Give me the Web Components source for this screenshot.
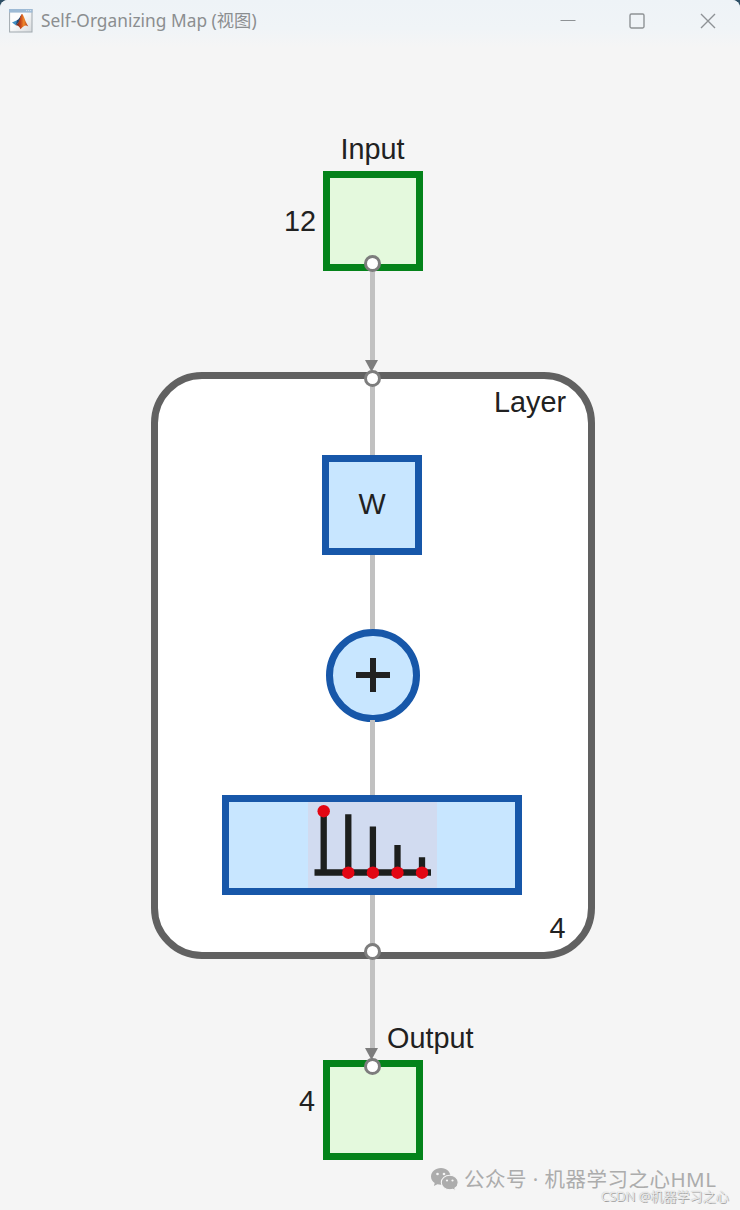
<!DOCTYPE html>
<html lang="zh">
<head>
<meta charset="utf-8">
<title>Self-Organizing Map</title>
<style>
body{margin:0;background:#2d4f66}
</style>
</head>
<body>
<map-window></map-window>
<script>
const define = (name, html, setup) => customElements.define(name, class extends HTMLElement {
  constructor() {
    super();
    this.attachShadow({mode: 'open'}).innerHTML = html;
  }
  connectedCallback() {
    if (this.hasAttribute('x')) {
      this.style.position = 'absolute';
      this.style.left = this.getAttribute('x') + 'px';
      this.style.top = this.getAttribute('y') + 'px';
    }
    if (setup) setup(this);
  }
});

const size = el => {
  el.style.width = el.getAttribute('w') + 'px';
  el.style.height = el.getAttribute('h') + 'px';
};

define('title-bar', `
<style>
:host{display:flex;align-items:center;height:48px;box-sizing:border-box;padding:0 24px 7px 9px;background:linear-gradient(#eef3f7 0,#f0f4f7 60%,#f5f5f5 100%);color:#8b8e90;font:17.3px/24px "Noto Sans","Noto Sans CJK SC",sans-serif}
.name{margin-left:8px;flex:1;white-space:nowrap;letter-spacing:.03px}
svg{display:block;flex:none}
.min{margin-right:53px}.max{margin-right:55px}
</style>
<svg width="24" height="24" viewBox="0 0 24 24">
  <defs>
    <linearGradient id="p" x2="1" y2="1"><stop offset=".4" stop-color="#fdfdfd"/><stop offset="1" stop-color="#d6dadd"/></linearGradient>
    <linearGradient id="f"><stop offset="0" stop-color="#5a1c1c"/><stop offset=".4" stop-color="#c9481c"/><stop offset=".65" stop-color="#f08a2a"/><stop offset="1" stop-color="#a82c16"/></linearGradient>
  </defs>
  <rect x=".6" y=".6" width="22.4" height="22.4" fill="url(#p)" stroke="#a0a8ae"/>
  <rect x="0" y="0" width="23.5" height="3.6" fill="#9dbad5"/>
  <path d="M17 1.6h1.2M19 1.6h1.2M21 1.6h1.2" stroke="#d5e2ee"/>
  <path d="M3 13.4 8 11.3 10 13 6.8 16.3Z" fill="#3f8fc4"/>
  <path d="M8 11.3C10 10.6 11 7 13 5L10.5 12.5 6.8 16.3Z" fill="#244a74"/>
  <path d="M13 4.8C15 6.5 16.2 13 19.3 17.4 16.8 15.7 15 16.2 11.6 20.2 10.5 17.6 9 16.3 6.8 16.3 10.5 14.5 11 7 13 4.8Z" fill="url(#f)"/>
</svg>
<span class="name"><slot></slot></span>
<svg class="min" width="16" height="16"><path d="M.5 7.5h15" stroke="#8e9295" stroke-width="1.2"/></svg>
<svg class="max" width="16" height="16"><rect x="1" y="1" width="14" height="14" rx="1.4" fill="none" stroke="#8e9295" stroke-width="1.4"/></svg>
<svg width="16" height="16"><path d="M1 1l14 14M15 1L1 15" stroke="#8e9295" stroke-width="1.4"/></svg>
`);

define('diagram-node', `
<style>
:host{display:block;box-sizing:border-box}
:host([kind=io]){background:#e4f9dd;border:7px solid #04831a}
:host([kind=op]){background:#c8e6ff;border:7px solid #1757a9}
:host([kind=sum]){background:#c8e6ff;border:7px solid #1757a9;border-radius:50%}
:host([kind=layer]){background:#fff;border:7px solid #616161;border-radius:51px}
</style><slot></slot>`, size);

define('diagram-label', `
<style>
:host{display:block;font:28.8px/32px "Liberation Sans",Arial,sans-serif;color:#212121;white-space:nowrap}
</style><slot></slot>`);

define('diagram-wire', `
<style>:host{display:block;width:4.6px;background:#c1c1c1}</style>`, el => {
  el.style.height = el.getAttribute('h') + 'px';
});

define('diagram-port', `
<style>:host{display:block;box-sizing:border-box;width:17px;height:17px;border:3px solid #7d7d7d;border-radius:50%;background:#fff}</style>`);

define('wire-arrow', `
<style>:host{display:block;width:13px;height:12px}svg{display:block}</style>
<svg width="13" height="12"><path d="M0 0h13L6.500 12Z" fill="#7d7d7d"/></svg>`);

define('plus-glyph', `
<style>:host{display:block}svg{display:block}</style>
<svg width="34" height="34"><path d="M17 0v34M0 17h34" stroke="#212121" stroke-width="6"/></svg>`);

define('compete-glyph', `
<style>:host{display:block}svg{display:block}</style>
<svg width="129" height="86">
  <rect width="129" height="86" fill="#d1dbf0"/>
  <path d="M6.500 70.500H123M15.700 8V73.700M40.300 12.200V70M64.900 24.500V70M89.500 43V70M114 55.300V70" stroke="#1d1f1d" stroke-width="6.300"/>
  <g fill="#e30613"><circle cx="15.700" cy="9.200" r="6.200"/><circle cx="40.300" cy="70.700" r="6.200"/><circle cx="64.900" cy="70.700" r="6.200"/><circle cx="89.500" cy="70.700" r="6.200"/><circle cx="114" cy="70.700" r="6.200"/></g>
</svg>`);

define('account-mark', `
<style>
:host{display:flex;align-items:center;gap:5px;color:#acacac;font:20.500px/28px "Noto Sans","Noto Sans CJK SC",sans-serif;letter-spacing:.48px;white-space:nowrap}
svg{display:block;flex:none}
</style>
<svg width="28" height="23" viewBox="0 0 28 23">
  <path d="M10 0C4.400 0 0 3.700 0 8.500c0 2.700 1.400 5 3.700 6.600L2.900 18l3.500-1.800c1.100.3 2.400.5 3.600.5C15.600 16.700 19.500 13 19.500 8.500S15.600 0 10 0Z" fill="#acacac"/>
  <path d="M18.800 7.300c-4.800 0-8.500 3.200-8.500 7.200s3.700 7.200 8.500 7.200c1 0 2-.1 3-.4l2.800 1.500-.7-2.500c2-1.300 3.300-3.400 3.300-5.800 0-4-3.700-7.200-8.400-7.200Z" fill="#acacac" stroke="#f5f5f5" stroke-width="1.100"/>
  <g fill="#f5f5f5"><circle cx="6.500" cy="6" r="1.300"/><circle cx="13" cy="6" r="1.300"/><circle cx="16" cy="12.500" r="1.100"/><circle cx="21.500" cy="12.500" r="1.100"/></g>
</svg>
<span><slot></slot></span>`);

define('credit-mark', `
<style>:host{display:block;font:300 13px/18px "Noto Sans","Noto Sans CJK SC",sans-serif;letter-spacing:.08px;color:#f4f4f4;text-shadow:1px 1px 0 #9c9c9c,0 0 1px #999;white-space:nowrap}
</style><slot></slot>`);

define('map-window', `
<style>
:host{display:flex;flex-direction:column;width:740px;height:1210px;background:#f5f5f5;border-radius:8px 8px 0 0;overflow:hidden;position:relative}
</style>
<title-bar>Self-Organizing Map (视图)</title-bar>
<diagram-node kind="layer" x="151.300" y="372" w="443.700" h="587"></diagram-node>
<diagram-node kind="io" x="323.300" y="171" w="99.700" h="99.700"></diagram-node>
<diagram-node kind="io" x="323.300" y="1060" w="99.700" h="99.700"></diagram-node>
<diagram-wire x="370.200" y="270" h="92"></diagram-wire>
<diagram-wire x="370.200" y="386" h="70"></diagram-wire>
<diagram-wire x="370.200" y="554" h="75"></diagram-wire>
<diagram-wire x="370.200" y="894" h="52"></diagram-wire>
<diagram-wire x="370.200" y="958" h="92"></diagram-wire>
<diagram-node kind="op" x="322.300" y="455" w="99.700" h="99.700"></diagram-node>
<diagram-node kind="sum" x="326.400" y="629" w="93.300" h="93.300"></diagram-node>
<diagram-wire x="370.200" y="720" h="76"></diagram-wire>
<plus-glyph x="356" y="658"></plus-glyph>
<diagram-node kind="op" x="222" y="795" w="300.300" h="99.700"></diagram-node>
<compete-glyph x="308" y="802"></compete-glyph>
<wire-arrow x="365" y="360"></wire-arrow>
<wire-arrow x="365" y="1048"></wire-arrow>
<diagram-port x="364" y="255"></diagram-port>
<diagram-port x="364" y="370"></diagram-port>
<diagram-port x="364" y="943"></diagram-port>
<diagram-port x="364" y="1058"></diagram-port>
<diagram-label x="340.500" y="133">Input</diagram-label>
<diagram-label x="284" y="205">12</diagram-label>
<diagram-label x="494" y="386">Layer</diagram-label>
<diagram-label x="358.500" y="488">W</diagram-label>
<diagram-label x="549.500" y="912">4</diagram-label>
<diagram-label x="387" y="1022">Output</diagram-label>
<diagram-label x="299" y="1085">4</diagram-label>
<account-mark x="431" y="1165">公众号 · 机器学习之心HML</account-mark>
<credit-mark x="601" y="1187">CSDN @机器学习之心</credit-mark>
`);
</script>
</body>
</html>
